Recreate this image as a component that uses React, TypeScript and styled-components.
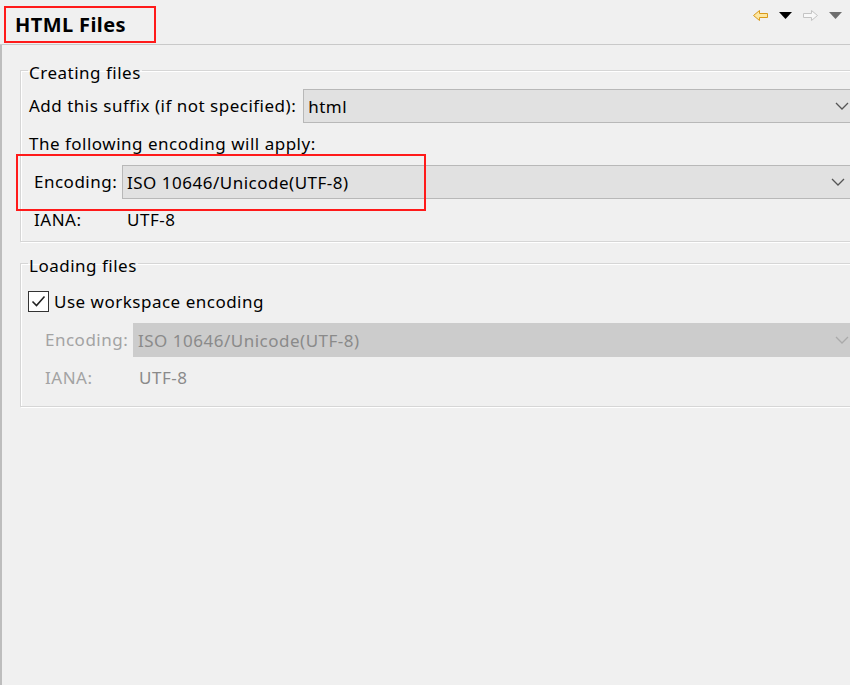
import * as React from 'react';
import styled, { createGlobalStyle } from 'styled-components';

const GlobalStyle = createGlobalStyle`
  html, body {
    margin: 0;
    padding: 0;
    background: #f0f0f0;
  }
  body {
    font-family: "Noto Sans", "Liberation Sans", sans-serif;
    font-size: 17px;
    letter-spacing: 0.5px;
    color: #000;
  }
`;

const Page = styled.div`
  width: 850px;
  height: 685px;
  overflow: hidden;
  display: flex;
  flex-direction: column;
  background: #f0f0f0;
`;

const Header = styled.div`
  height: 44px;
  flex: 0 0 auto;
  display: flex;
  align-items: flex-start;
  justify-content: space-between;
  border-bottom: 1px solid #c9c9c9;
`;

const Title = styled.h1`
  margin: 6px 0 0 4px;
  width: 152px;
  height: 37px;
  box-sizing: border-box;
  padding: 0 0 0 9px;
  border: 2px solid #ff1a1a;
  font-size: 20px;
  font-weight: 700;
  letter-spacing: 0.4px;
  line-height: 33px;
  white-space: nowrap;
`;

const NavBar = styled.div`
  display: flex;
  align-items: center;
  gap: 10px;
  padding: 9px 8px 0 0;
`;

const Body = styled.div`
  flex: 1;
  border-left: 2px solid #bdbdbd;
  padding: 11px 0 0 18px;
  overflow: hidden;
`;

const Group = styled.fieldset<{ $padTop: number; $padBottom: number }>`
  margin: 0 -8px 7px 0;
  padding: ${p => p.$padTop}px 0 ${p => p.$padBottom}px 8px;
  border: 1px solid #d6d6d6;
  box-shadow: inset 1px 1px 0 #fff, 1px 1px 0 #fff;
  min-width: 0;
  display: flex;
  flex-direction: column;
  gap: 10px;
`;

const Legend = styled.legend`
  padding: 6px 1px 0 1px;
  margin-left: -1px;
  line-height: 22px;
`;

const TextRow = styled.div`
  height: 22px;
  line-height: 22px;
  white-space: nowrap;
`;

const SuffixRow = styled.div`
  display: flex;
  align-items: center;
  height: 34px;
  gap: 7px;
`;

const EncodingGrid = styled.div<{ $indent: number }>`
  display: grid;
  grid-template-columns: 84px 1fr;
  column-gap: 4px;
  padding-left: ${p => p.$indent}px;
  position: relative;
`;

const FieldLabel = styled.span<{ $disabled?: boolean }>`
  line-height: 22px;
  align-self: center;
  white-space: nowrap;
  color: ${p => (p.$disabled ? '#a3a3a3' : '#000')};
`;

const FieldValue = styled.span<{ $disabled?: boolean }>`
  line-height: 22px;
  padding-left: ${p => (p.$disabled ? 6 : 5)}px;
  color: ${p => (p.$disabled ? '#8a8a8a' : '#000')};
`;

const Combo = styled.div<{ $disabled?: boolean; $trim?: number }>`
  flex: 1;
  height: 34px;
  box-sizing: border-box;
  display: flex;
  align-items: center;
  justify-content: space-between;
  padding: 0 7px 0 4px;
  margin-right: ${p => p.$trim ?? 0}px;
  background: ${p => (p.$disabled ? '#cccccc' : '#e1e1e1')};
  border: 1px solid ${p => (p.$disabled ? '#cccccc' : '#b8b8b8')};
  color: ${p => (p.$disabled ? '#8a8a8a' : '#000')};
  white-space: nowrap;
`;

const Highlight = styled.div`
  position: absolute;
  left: -13px;
  top: -11px;
  width: 410px;
  height: 57px;
  box-sizing: border-box;
  border: 2px solid #ff1a1a;
  pointer-events: none;
`;

const CheckRow = styled.label`
  display: flex;
  align-items: center;
  gap: 5px;
  height: 22px;
  margin: 0 0 1px -1px;
  white-space: nowrap;
`;

const CheckBox = styled.span`
  width: 21px;
  height: 21px;
  box-sizing: border-box;
  border: 1px solid #333;
  background: #fff;
  display: flex;
  align-items: center;
  justify-content: center;
`;

const Chevron = ({ color }: { color: string }) => (
  <svg width="14" height="8" viewBox="0 0 14 8">
    <polyline points="1,1 7,7 13,1" fill="none" stroke={color} strokeWidth="1.3" />
  </svg>
);

const Arrow = ({ dir, fill, stroke }: { dir: 'left' | 'right'; fill: string; stroke: string }) => (
  <svg width="17" height="13" viewBox="0 0 17 13" style={{ transform: dir === 'right' ? 'scaleX(-1)' : undefined }}>
    <path d="M1.5 6.5 L7.5 1.5 L7.5 4.5 L15.5 4.5 L15.5 8.5 L7.5 8.5 L7.5 11.5 Z" fill={fill} stroke={stroke} strokeWidth="1" strokeLinejoin="round" />
  </svg>
);

const Caret = ({ color }: { color: string }) => (
  <svg width="13" height="7" viewBox="0 0 13 7">
    <polygon points="0,0 13,0 6.5,7" fill={color} />
  </svg>
);

const App = () => (
  <Page>
    <GlobalStyle />
    <Header>
      <Title>HTML Files</Title>
      <NavBar>
        <Arrow dir="left" fill="#fde7a2" stroke="#d99a1c" />
        <Caret color="#000" />
        <Arrow dir="right" fill="#f8f8f8" stroke="#c4c4c4" />
        <Caret color="#6e6e6e" />
      </NavBar>
    </Header>
    <Body>
      <Group $padTop={5} $padBottom={10}>
        <Legend>Creating files</Legend>
        <SuffixRow>
          <FieldLabel>Add this suffix (if not specified):</FieldLabel>
          <Combo>
            html
            <Chevron color="#555" />
          </Combo>
        </SuffixRow>
        <TextRow>The following encoding will apply:</TextRow>
        <EncodingGrid $indent={5}>
          <FieldLabel>Encoding:</FieldLabel>
          <Combo $trim={4}>
            ISO 10646/Unicode(UTF-8)
            <Chevron color="#555" />
          </Combo>
          <Highlight />
        </EncodingGrid>
        <EncodingGrid $indent={5}>
          <FieldLabel>IANA:</FieldLabel>
          <FieldValue>UTF-8</FieldValue>
        </EncodingGrid>
      </Group>
      <Group $padTop={13} $padBottom={17}>
        <Legend>Loading files</Legend>
        <CheckRow>
          <CheckBox>
            <svg width="15" height="13" viewBox="0 0 15 13">
              <polyline points="1.5,6.5 5.5,10.5 13.5,1.5" fill="none" stroke="#222" strokeWidth="1.6" />
            </svg>
          </CheckBox>
          Use workspace encoding
        </CheckRow>
        <EncodingGrid $indent={16}>
          <FieldLabel $disabled>Encoding:</FieldLabel>
          <Combo $disabled>
            ISO 10646/Unicode(UTF-8)
            <Chevron color="#aaa" />
          </Combo>
        </EncodingGrid>
        <EncodingGrid $indent={16}>
          <FieldLabel $disabled>IANA:</FieldLabel>
          <FieldValue $disabled>UTF-8</FieldValue>
        </EncodingGrid>
      </Group>
    </Body>
  </Page>
);

export default App;
